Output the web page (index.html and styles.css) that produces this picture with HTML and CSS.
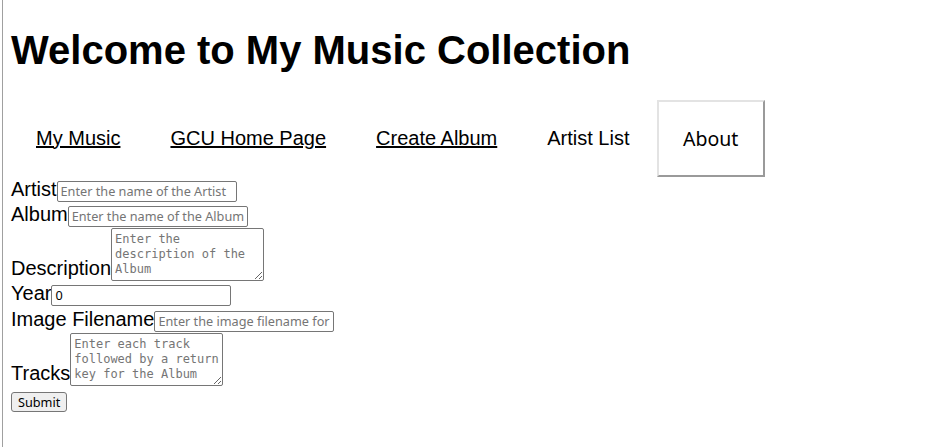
FILE: index.html
```html
<!DOCTYPE html>
<html lang="en">
<head>
<meta charset="utf-8">
<title>My Music Collection</title>
<link rel="stylesheet" href="styles.css">
</head>
<body>
<h1 class="title">Welcome to My Music Collection</h1>
<ul class="nav">
  <li><a class="nav-link" href="#">My Music</a></li>
  <li><a class="nav-link" href="#">GCU Home Page</a></li>
  <li><a class="nav-link" href="#">Create Album</a></li>
  <li><span class="nav-link plain">Artist List</span></li>
  <li class="nav-about"><span class="nav-link about">About</span></li>
</ul>
<form class="album-form">
  <div class="row"><label class="lbl">Artist</label><input class="field" type="text" placeholder="Enter the name of the Artist"></div>
  <div class="row"><label class="lbl">Album</label><input class="field" type="text" placeholder="Enter the name of the Album"></div>
  <div class="row"><label class="lbl">Description</label><textarea class="area" rows="3" placeholder="Enter the description of the Album"></textarea></div>
  <div class="row"><label class="lbl">Year</label><input class="field" type="number" value="0"></div>
  <div class="row row-tall"><label class="lbl">Image Filename</label><input class="field" type="text" placeholder="Enter the image filename for the Album"></div>
  <div class="row"><label class="lbl">Tracks</label><textarea class="area" rows="3" placeholder="Enter each track followed by a return key for the Album"></textarea></div>
  <div class="actions"><button class="submit" type="button">Submit</button></div>
</form>
</body>
</html>
```
FILE: styles.css
```css
html {
  margin: 0;
  padding: 0 0 0 2px;
  background: #fff;
}
body {
  margin: 0;
  padding: 0 8px 8px 8px;
  border-left: 1px solid #a0a0a0;
  min-height: 100vh;
  box-sizing: border-box;
  display: flow-root;
  font-family: "Liberation Sans", Arial, sans-serif;
  color: #000;
}
.title {
  font-size: 40px;
  font-weight: bold;
  margin: 26.8px 0;
  line-height: 46px;
}
.nav {
  list-style: none;
  margin: 0;
  padding: 0;
  display: flex;
  align-items: center;
}
.nav-about {
  margin-left: 2px;
}
.nav-link {
  display: block;
  padding: 25px;
  font-size: 20px;
  line-height: 23px;
  color: #000;
  text-decoration: underline;
}
.nav-link.plain {
  text-decoration: none;
}
.nav-link.about {
  text-decoration: none;
  font-family: "Noto Sans", "Open Sans", sans-serif;
  font-size: 19.5px;
  padding: 25px 24.5px;
  border: 2px solid;
  border-color: #e3e3e3 #9a9a9a #9a9a9a #e3e3e3;
}
.album-form {
  margin: 0;
}
.row {
  display: flex;
  align-items: flex-end;
}
.row-tall {
  padding-top: 1px;
}
.lbl {
  font-size: 20px;
  line-height: 23px;
  padding: 1px 0;
}
.field {
  width: 180px;
  height: 21px;
  box-sizing: border-box;
  padding: 1px 3px;
  border: 1px solid #767676;
  border-radius: 2px;
  font-family: "Noto Sans", "Open Sans", sans-serif;
  font-size: 12.7px;
  line-height: 17px;
  color: #000;
  margin: 0;
  -moz-appearance: textfield;
  appearance: textfield;
}
.field::-webkit-inner-spin-button,
.field::-webkit-outer-spin-button {
  -webkit-appearance: none;
  margin: 0;
}
.field::placeholder {
  color: #757575;
}
.area {
  width: 153px;
  height: 53px;
  box-sizing: border-box;
  padding: 3px;
  border: 1px solid #767676;
  border-radius: 2px;
  font-family: "DejaVu Sans Mono", monospace;
  font-size: 12px;
  line-height: 15px;
  margin: 1px 0 0 0;
}
.area::placeholder {
  color: #757575;
}
.actions {
  padding-top: 6px;
}
.submit {
  font-family: "Noto Sans", "Open Sans", sans-serif;
  font-size: 12.7px;
  line-height: 16px;
  padding: 1px 6px;
  height: 20px;
  margin: 0;
  background: #efefef;
  border: 1px solid #767676;
  border-radius: 3px;
  color: #000;
}
```
